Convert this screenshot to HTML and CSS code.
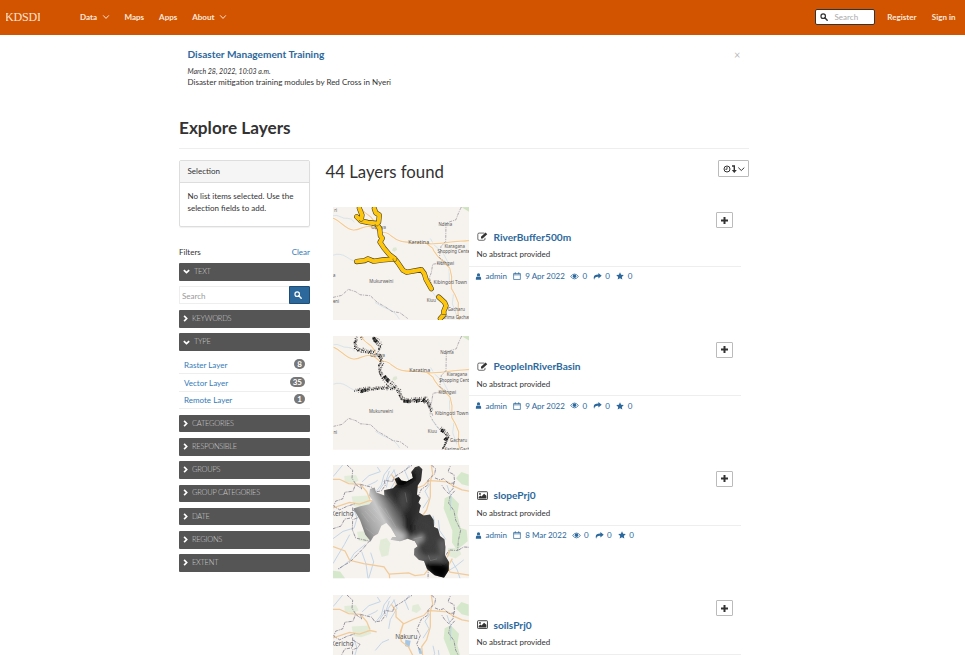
FILE: index.html
```
<!DOCTYPE html>
<html lang="en">
<head>
<meta charset="utf-8">
<title>Explore Layers</title>
<link rel="stylesheet" href="styles.css">
</head>
<body>
<svg class="defs" aria-hidden="true">
  <symbol id="chev" viewBox="0 0 10 10"><path d="M1.5 3 5 6.8 8.5 3" fill="none" stroke="currentColor" stroke-width="1.2"/></symbol>
  <symbol id="bold-chev" viewBox="0 0 10 10"><path d="M1.2 3 5 6.7 8.8 3" fill="none" stroke="currentColor" stroke-width="2.4"/></symbol>
  <symbol id="search" viewBox="0 0 10 10"><circle cx="4" cy="4" r="2.8" fill="none" stroke="currentColor" stroke-width="1.5"/><path d="M6 6 9 9" stroke="currentColor" stroke-width="1.8" stroke-linecap="round"/></symbol>
  <symbol id="edit" viewBox="0 0 12 10"><path d="M8 1.2H2.2Q.8 1.2.8 2.6V7.8Q.8 9.2 2.2 9.2H7.4Q8.8 9.2 8.8 7.8V6.5" fill="none" stroke="currentColor" stroke-width=".8"/><path d="M4.3 7.3V5.4L9.4.6 11.3 2.5 6.2 7.3Z" fill="currentColor"/></symbol>
  <symbol id="image" viewBox="0 0 12 10"><rect x=".5" y=".8" width="11" height="8.6" rx=".7" fill="none" stroke="currentColor"/><circle cx="3.2" cy="3.2" r="1.1" fill="currentColor"/><path d="M1.7 8.2V6.6L3.6 5 4.8 6.1 7.8 3.1 10.3 5.4V8.2Z" fill="currentColor"/></symbol>
  <symbol id="user" viewBox="0 0 8 9"><circle cx="4" cy="2.5" r="2.1" fill="currentColor"/><path d="M.6 8.6Q.4 4.5 2.4 4.4 4 5.6 5.6 4.4 7.6 4.5 7.4 8.6Z" fill="currentColor"/></symbol>
  <symbol id="cal" viewBox="0 0 9 9"><path d="M.7 1.7H8.3V8.4H.7ZM.7 3.2H8.3M2.6.2V2.4M6.4.2V2.4" fill="none" stroke="currentColor" stroke-width=".8"/></symbol>
  <symbol id="eye" viewBox="0 0 10 8"><path d="M.5 4Q5-1.6 9.5 4 5 9.4.5 4Z" fill="none" stroke="currentColor" stroke-width=".9"/><circle cx="5" cy="3.6" r="2" fill="currentColor"/></symbol>
  <symbol id="share" viewBox="0 0 10 8"><path d="M6 0 9.8 3.1 6 6.2V4.4Q2 4 1.1 7.7-.8 2 6 1.8Z" fill="currentColor"/></symbol>
  <symbol id="star" viewBox="0 0 10 10"><path d="M5 .4 6.4 3.4 9.7 3.8 7.3 6.1 7.9 9.4 5 7.8 2.1 9.4 2.7 6.1.3 3.8 3.6 3.4Z" fill="currentColor"/></symbol>

  <symbol id="town-map" viewBox="24 21 408 339">
    <rect x="24" y="21" width="408" height="339" fill="#f6f2ee"/>
    <g fill="none" stroke-linejoin="round">
      <path d="M205 143 214 141 216 149 208 155 201 151Z" fill="#dce8d1"/>
      <path d="M409 22 432 21V35L420 28Z" fill="#cfe3c1"/>
      <path d="M24 47Q36 44 46 50T68 55 88 66M24 165Q45 157 66 171T96 185M316 115 327 134 354 158 372 192 373 240 386 276 382 310 395 345M319 270 333 290 346 304M150 306Q175 322 192 327T223 356" stroke="#cbdde8" stroke-width="2"/>
      <path d="M24 54C50 64 62 90 86 90S117 73 139 80 157 97 169 97 180 95 190 101 207 117 227 123 275 125 296 129 348 130 374 126 409 124 432 121M304 129 323 144 327 153 338 168 359 188 374 203 380 229 379 264 390 283 400 307 399 339 403 360M106 21Q117 38 131 46T153 79" stroke="#fff" stroke-width="6"/>
      <path d="M24 54C50 64 62 90 86 90S117 73 139 80 157 97 169 97 180 95 190 101 207 117 227 123 275 125 296 129 348 130 374 126 409 124 432 121M304 129 323 144 327 153 338 168 359 188 374 203 380 229 379 264 390 283 400 307 399 339 403 360M106 21Q117 38 131 46T153 79" stroke="#f3cd98" stroke-width="4"/>
      <path d="M409 21Q399 41 393 59L363 69 362 124 348 139 343 172 362 186 323 192 319 217 313 232 323 262M24 291 50 285 70 267 92 274 105 283 136 286 157 306 182 320 201 333 225 337 248 354" stroke="#a29da5" stroke-width="2.5" stroke-dasharray="9 3 3 3"/>
    </g>
  </symbol>

  <symbol id="region-map" viewBox="24 15 408 342">
    <rect x="24" y="15" width="408" height="342" fill="#f6f2ee"/>
    <g fill="#d6e8cb">
      <path d="M359 115 377 106 402 132 397 166 407 205 425 211 428 245 396 271 381 249 382 212 356 146Z"/>
      <path d="M409 36 431 44V78L410 73 393 55Z"/>
      <g opacity=".6"><path d="M166 240 185 235 196 251 190 287 170 292 162 267Z"/><path d="M80 110 131 107 139 132 109 142 86 139Z"/><path d="M96 216 122 214 137 237 125 247 101 243Z"/><path d="M369 266 401 264 409 284 392 297 371 289Z"/><path d="M262 47 280 42 289 58 275 69 260 64ZM58 48 93 45 101 62 83 71 59 65Z"/></g>
      <path d="M24 334 45 336 61 357H24Z"/>
    </g>
    <g fill="none" stroke="#b0cce5" stroke-width="2.2">
      <path d="M53 15 31 42 24 50M111 66 132 47 166 35 157 21M128 77 151 66 158 61M151 98 169 75 177 45 196 20M164 89 183 62 193 33M184 83 190 55 209 29M191 117 196 89 216 55 206 29M251 60 240 34 253 15M294 145 312 117 300 94 316 71M318 221 329 191 324 168M340 181 344 213 362 239M366 76 378 110 376 152M24 237 54 215 87 205 96 175 87 149M24 312 41 283 58 255 74 225M42 329 76 301 87 282 121 254M129 357 123 313 110 276M131 357 146 307 137 279M379 301 397 332 405 357M416 301 391 321 373 332M151 182 171 158 192 149"/>
    </g>
    <g fill="#a3c7e5"><path d="M241 150 257 153 253 173 240 169ZM279 176 286 175 294 193 283 192Z"/></g>
    <path d="M24 58 44 58 71 71 106 73 125 95 135 119M24 144 74 128 103 133 135 122 155 126M24 261 60 274 74 302 116 312 177 322 192 344 251 340 270 348 298 345 316 321M194 357 193 344M199 43 213 63 213 81 235 101 225 134 229 155 251 172 269 209M225 129 234 103 265 88 296 77 310 62 328 63 368 66 384 78 411 90 432 94M316 62 316 111 305 150 290 171 294 205M316 63 323 42 319 15M382 297 369 320 375 338 432 347M374 274 367 293" fill="none" stroke="#f1cb99" stroke-width="3.8"/>
    <path d="M66 15 83 31 81 55 92 72 84 94 60 97 53 117 32 124 26 139 44 150 67 139 90 132M93 74 110 87 105 73 140 82 150 96 169 93 181 76 177 61 203 65 207 51 230 37 247 25 261 16M135 242 114 267 76 306 38 329M83 143 82 174 59 178 48 199 24 207M84 151 105 164 98 174 83 180 82 210 92 235 136 245M284 180 275 163 286 137 276 118 289 88 309 75 309 60 329 42 332 26 319 15M330 54 345 60 356 56 371 71 389 69 387 44 369 35 376 18M387 65 384 86 371 101 359 89 350 75M389 93 375 109 371 130 387 153 392 181 407 211 400 243 398 273 373 271 357 295 352 315M401 271 416 262 432 263M310 324 309 357" fill="none" stroke="#8f8c9a" stroke-width="2.8" stroke-dasharray="10 3 3 3"/>
  </symbol>

  <linearGradient id="relief" gradientUnits="userSpaceOnUse" x1="105" y1="205" x2="270" y2="120">
    <stop offset="0" stop-color="#777"/><stop offset=".17" stop-color="#a5a5a5"/><stop offset=".4" stop-color="#c8c8c8"/><stop offset=".58" stop-color="#777"/><stop offset=".75" stop-color="#3a3a3a"/><stop offset="1" stop-color="#3c3c3c"/>
  </linearGradient>
  <filter id="soften" x="-30%" y="-30%" width="160%" height="160%"><feGaussianBlur stdDeviation="8"/></filter>
  <clipPath id="county"><path id="county-edge" d="M85 146 106 139 133 133 143 121 132 107 135 87 149 83 153 97 178 107 177 91 204 85 216 73 209 57 221 51 229 62 245 65 264 54 259 36 270 22 282 18 292 28 288 62 278 77 276 104 287 114 280 129 287 137 282 158 296 167 315 164 326 181 327 202 339 207 345 229 358 239 361 262 360 287 372 307 371 333 357 355 329 347 306 328 297 304 282 301 267 286 268 267 278 260 270 245 248 237 225 245 197 240 202 232 214 232 197 204 184 190 169 198 159 222 146 230 137 245 121 225 105 181Z"/></clipPath>
</svg>

<header class="topbar">
  <div class="brand">KDSDI</div>
  <nav class="menu">
    <a>Data <svg class="caret"><use href="#chev"/></svg></a><a>Maps</a><a>Apps</a><a>About <svg class="caret"><use href="#chev"/></svg></a>
  </nav>
  <div class="top-search"><svg><use href="#search"/></svg><span>Search</span></div>
  <a class="register">Register</a><a class="signin">Sign in</a>
</header>

<main class="page">
  <section class="notice">
    <div>
      <h4>Disaster Management Training</h4>
      <em>March 28, 2022, 10:03 a.m.</em>
      <p>Disaster mitigation training modules by Red Cross in Nyeri</p>
    </div>
    <span class="close">×</span>
  </section>
  <h2 class="title">Explore Layers</h2>

  <div class="columns">
    <aside class="side">
      <div class="panel">
        <div class="panel-head">Selection</div>
        <div class="panel-body">No list items selected. Use the selection fields to add.</div>
      </div>
      <div class="filters-head"><span>Filters</span><a>Clear</a></div>
      <div class="bar open"><svg><use href="#bold-chev"/></svg>TEXT</div>
      <div class="side-search"><span>Search</span><button aria-label="Search"><svg><use href="#search"/></svg></button></div>
      <div class="bar"><svg><use href="#bold-chev"/></svg>KEYWORDS</div>
      <div class="bar open"><svg><use href="#bold-chev"/></svg>TYPE</div>
      <ul class="types">
        <li><a>Raster Layer</a><b>8</b></li>
        <li><a>Vector Layer</a><b>35</b></li>
        <li><a>Remote Layer</a><b>1</b></li>
      </ul>
      <div class="bar"><svg><use href="#bold-chev"/></svg>CATEGORIES</div>
      <div class="bar"><svg><use href="#bold-chev"/></svg>RESPONSIBLE</div>
      <div class="bar"><svg><use href="#bold-chev"/></svg>GROUPS</div>
      <div class="bar"><svg><use href="#bold-chev"/></svg>GROUP CATEGORIES</div>
      <div class="bar"><svg><use href="#bold-chev"/></svg>DATE</div>
      <div class="bar"><svg><use href="#bold-chev"/></svg>REGIONS</div>
      <div class="bar"><svg><use href="#bold-chev"/></svg>EXTENT</div>
    </aside>

    <section class="results">
      <div class="results-head">
        <h3>44 Layers found</h3>
        <button class="sort" aria-label="Sort"><svg viewBox="0 0 22 10"><g fill="none" stroke="currentColor"><circle cx="4" cy="5" r="3" stroke-width="1"/><path d="M4 3V5.3H2.3" stroke-width=".9"/><path d="M9 2H11.3V7" stroke-width="1.4"/><path d="M15.3 3.6 18.3 6.5 21.3 3.6" stroke-width="1"/></g><path d="M8.8 6H13.8L11.3 9Z" fill="currentColor"/></svg></button>
      </div>

      <article class="layer">
        <svg class="thumb" viewBox="24 21 408 339" preserveAspectRatio="none">
          <use href="#town-map" x="24" y="21" width="408" height="339"/>
          <g class="map-label">
            <text x="32" y="35">ri</text><text x="161" y="86">Othaya</text><text x="361" y="78">Ndima</text><text x="281" y="131" class="large">Karatina</text><text x="389" y="143">Kiaragana</text><text x="389" y="159">Shopping Center</text><text x="361" y="194">Kibingwi</text><text x="169" y="247">Mukurweini</text><text x="376" y="252" class="town">Kibingoti Town</text><text x="319" y="306">Kiuu</text><text x="394" y="331">Gacharu</text><text x="392" y="356">Karima Gachari</text><text x="33" y="307">eni</text><text x="28" y="231">a</text>
          </g>
          <g fill="none" stroke-linecap="round" stroke-linejoin="round">
            <path class="buffer-edge" d="M103 25 111 45 108 62 95 50M108 63 128 67 155 70M148 26 152 38 163 45 161 66 155 73 164 85 166 107 172 114 165 126 177 144 194 164 209 175M95 184 119 181 129 176 146 183 173 179 208 176M209 175 219 188 234 210 245 216 289 208 298 220 303 237 319 265M341 290 359 306 363 316 356 333 357 342 346 354"/>
            <path class="buffer" d="M103 25 111 45 108 62 95 50M108 63 128 67 155 70M148 26 152 38 163 45 161 66 155 73 164 85 166 107 172 114 165 126 177 144 194 164 209 175M95 184 119 181 129 176 146 183 173 179 208 176M209 175 219 188 234 210 245 216 289 208 298 220 303 237 319 265M341 290 359 306 363 316 356 333 357 342 346 354"/>
            <path d="M103 61A6 6 0 0 0 114 61M150 73A6 6 0 0 0 160 76M204 176A6 6 0 1 0 215 175M351 342H362" stroke="#373321" stroke-width="1.6"/>
          </g>
        </svg>
        <div class="info">
          <button class="add" aria-label="Add"><svg viewBox="0 0 9 9"><path d="M4.5 1V8M1 4.5H8" stroke="currentColor" stroke-width="2"/></svg></button>
          <h4><svg><use href="#edit"/></svg><a>RiverBuffer500m</a></h4>
          <p>No abstract provided</p>
          <div class="meta"><svg class="i-user"><use href="#user"/></svg><span>admin</span><svg class="i-cal"><use href="#cal"/></svg><span>9 Apr 2022</span><svg class="i-eye"><use href="#eye"/></svg><span>0</span><svg class="i-share"><use href="#share"/></svg><span>0</span><svg class="i-star"><use href="#star"/></svg><span>0</span></div>
        </div>
      </article>

      <article class="layer">
        <svg class="thumb" viewBox="24 18 408 339" preserveAspectRatio="none">
          <rect x="24" y="18" width="408" height="339" fill="#f6f2ee"/>
          <use href="#town-map" x="25" y="15" width="408" height="345"/>
          <g class="map-label">
            <text x="158" y="80">Othaya</text><text x="366" y="72">Ndima</text><text x="284" y="126" class="large">Karatina</text><text x="396" y="137">Kiaragana</text><text x="394" y="156">Shopping Center</text><text x="367" y="192">Kibingwi</text><text x="168" y="247">Mukurweini</text><text x="380" y="253" class="town">Kibingoti Town</text><text x="322" y="309">Kiuu</text><text x="401" y="335">Gacharu</text><text x="405" y="360">Karima Gachari</text><text x="31" y="311">ni</text>
          </g>
          <g fill="none" stroke="#171717">
            <g id="people">
              <path d="M91 25 87 44 92 54 98 62 110 60 123 66 M107 22 111 31M121 66 148 66M144 21 148 34 160 46 163 62M155 69 168 88 161 108 164 129 174 145 200 161 216 181 229 207 260 216M88 183 109 178 126 176 145 179 183 172 202 179M255 209 283 207 301 206 310 222 319 246M345 295 361 309 369 321 361 337 352 357" stroke-width="4.5" stroke-dasharray="2 4 1 3 5 2 1 5 3 3"/>
              <path d="M94 28 88 55 109 66 143 71M149 27 164 38 167 52M162 78 172 104 162 128 176 153 193 171 223 183 227 203 249 216M100 187 128 182 154 174 187 179M239 215 281 214 304 213 313 236M348 301 365 316 366 331 357 349" stroke-width="3" stroke-dasharray="1 4 4 3 2 5 1 2"/>
            </g>
            <use href="#people" x="4" y="-5" opacity=".6"/>
            <path d="M145 23 156 37M178 138 192 154M108 184 125 178M235 212 254 214M272 213 285 210M294 208 302 217M359 323 365 330M348 299 355 302" stroke-width="10" stroke-dasharray="5 1 2 1 1 1"/>
            <path d="M306 210 317 233 315 255 324 271 343 297" stroke-width="1.5" stroke-dasharray="2 4 1 3"/>
          </g>
        </svg>
        <div class="info">
          <button class="add" aria-label="Add"><svg viewBox="0 0 9 9"><path d="M4.5 1V8M1 4.5H8" stroke="currentColor" stroke-width="2"/></svg></button>
          <h4><svg><use href="#edit"/></svg><a>PeopleInRiverBasin</a></h4>
          <p>No abstract provided</p>
          <div class="meta"><svg class="i-user"><use href="#user"/></svg><span>admin</span><svg class="i-cal"><use href="#cal"/></svg><span>9 Apr 2022</span><svg class="i-eye"><use href="#eye"/></svg><span>0</span><svg class="i-share"><use href="#share"/></svg><span>0</span><svg class="i-star"><use href="#star"/></svg><span>0</span></div>
        </div>
      </article>

      <article class="layer">
        <svg class="thumb" viewBox="24 15 408 342" preserveAspectRatio="none">
          <use href="#region-map" x="24" y="15" width="408" height="342"/>
          <text x="52" y="169" class="map-label city">Kericho</text>
          <use href="#county-edge" fill="url(#relief)"/>
          <g clip-path="url(#county)">
            <g filter="url(#soften)">
              <path d="M175 90 232 70 280 15 300 80 282 160 253 215 239 161 190 110Z" fill="#202020" opacity=".55"/>
              <path d="M228 95 251 100 247 143 233 158 220 128Z" fill="#777" opacity=".35"/>
              <path d="M205 55 235 55 262 30 270 60 225 85Z" fill="#000"/>
              <path d="M245 140 264 210 257 240 243 205Z" fill="#181818"/>
              <path d="M282 165 325 190 340 250 325 280 295 260Z" fill="#3c3c3c"/>
              <path d="M257 238 290 222 298 236 280 255 268 273Z" fill="#999"/>
              <path d="M342 240 364 239 360 290 344 281Z" fill="#666"/>
              <path d="M275 291 350 288 357 303 301 302Z" fill="#666"/>
              <path d="M293 310 340 310 377 321 357 362 325 348Z" fill="#000"/>
              <path d="M205 205 245 226 233 248 195 241Z" fill="#bbb"/>
            </g>
            <path d="M110 159 131 187M119 153 151 187M130 148 164 183M143 143 178 181M163 138 196 180M180 145 212 202M121 204 147 225M240 97 246 128M310 287 316 303 336 298M265 238 292 232" fill="none" stroke="#ddd" stroke-width="1.5" opacity=".35"/>
          </g>
        </svg>
        <div class="info">
          <button class="add" aria-label="Add"><svg viewBox="0 0 9 9"><path d="M4.5 1V8M1 4.5H8" stroke="currentColor" stroke-width="2"/></svg></button>
          <h4><svg><use href="#image"/></svg><a>slopePrj0</a></h4>
          <p>No abstract provided</p>
          <div class="meta"><svg class="i-user"><use href="#user"/></svg><span>admin</span><svg class="i-cal"><use href="#cal"/></svg><span>8 Mar 2022</span><svg class="i-eye"><use href="#eye"/></svg><span>0</span><svg class="i-share"><use href="#share"/></svg><span>0</span><svg class="i-star"><use href="#star"/></svg><span>0</span></div>
        </div>
      </article>

      <article class="layer">
        <svg class="thumb" viewBox="24 15 408 342" preserveAspectRatio="none">
          <use href="#region-map" x="24" y="15" width="408" height="342"/>
          <text x="52" y="169" class="map-label city">Kericho</text>
          <text x="244" y="147" class="map-label city">Nakuru</text>
        </svg>
        <div class="info">
          <button class="add" aria-label="Add"><svg viewBox="0 0 9 9"><path d="M4.5 1V8M1 4.5H8" stroke="currentColor" stroke-width="2"/></svg></button>
          <h4><svg><use href="#image"/></svg><a>soilsPrj0</a></h4>
          <p>No abstract provided</p>
          <div class="meta"></div>
        </div>
      </article>
    </section>
  </div>
</main>
</body>
</html>
```
FILE: styles.css
```
* { box-sizing: border-box; }
html, body { height: 100%; }
body { margin: 0; overflow: hidden; background: #fff; color: #333; font: 8px/12px Lato, "Liberation Sans", sans-serif; }
h2, h3, h4, p, ul { margin: 0; padding: 0; }
a { color: #2c689c; }
button { padding: 0; font: inherit; }
svg { display: block; flex: none; }
.defs { position: absolute; width: 0; height: 0; }

.topbar { display: flex; align-items: center; height: 35px; padding: 0 9.5px 2px 6px; background: #d35400; color: #fff; font-weight: 700; }
.topbar a { color: #fbe9dc; white-space: nowrap; }
.brand { width: 34px; margin-right: 40px; overflow: hidden; text-indent: -1px; white-space: nowrap; letter-spacing: -.15px; font: 12px/14px "Liberation Serif", serif; color: #fbe3d2; }
.menu { display: flex; flex: 1; }
.menu a { display: flex; align-items: center; gap: 4.5px; margin-right: 15px; }
.caret { width: 8px; height: 8px; }
.top-search { display: flex; align-items: center; gap: 7px; width: 60px; height: 16px; margin-top: 1px; padding: 0 0 1px 3.5px; border: 1px solid #333; border-radius: 2px; background: #fff; color: #aaa; font-weight: 400; }
.top-search svg { width: 8px; height: 8px; color: #333; }
.register { margin-left: 12.3px; }
.signin { margin-left: 15.4px; }

.page { width: 570px; height: 620px; margin-left: 179px; overflow: hidden; }
.notice { display: flex; justify-content: space-between; height: 82px; padding: 12px 8.5px 0 8.5px; }
.notice h4 { font-size: 10.15px; line-height: 14px; font-weight: 700; color: #2c689c; }
.notice em { display: block; margin-top: 5px; font-size: 7px; line-height: 11px; }
.notice p { line-height: 11px; }
.close { font-size: 11px; line-height: 15px; color: #bbb; }
.title { height: 32px; border-bottom: 1px solid #eee; font-size: 17.2px; line-height: 21px; font-weight: 700; }
.columns { display: flex; gap: 15px; padding-top: 11px; }
.side { width: 131px; flex: none; }
.panel { height: 67px; border: 1px solid #ddd; border-radius: 2px; box-shadow: 0 1px 1px rgba(0,0,0,.06); }
.panel-head { height: 22px; padding-left: 7.5px; border-bottom: 1px solid #ddd; background: #f5f5f5; line-height: 21px; }
.panel-body { padding: 7px 7.5px; }
.filters-head { display: flex; justify-content: space-between; height: 36px; padding-top: 19px; }
.filters-head a { color: #337ab7; }
.bar { display: flex; align-items: center; gap: 3px; height: 17.5px; margin-bottom: 5.75px; padding-left: 3px; border-radius: 1px; background: #555; color: #ccc; font-size: 7.5px; font-weight: 300; letter-spacing: -.25px; }
.bar svg { width: 7px; height: 7px; margin-top: -1px; color: #fff; transform: rotate(-90deg); }
.bar.open { gap: 4px; padding-left: 4px; }
.bar.open svg { margin-top: 0; transform: none; }
.side-search { display: flex; height: 18px; margin-bottom: 5.9px; border: 1px solid #eee; color: #999; line-height: 18px; }
.side-search span { flex: 1; padding-left: 2px; }
.side-search button { display: flex; align-items: center; justify-content: center; width: 21px; height: 18px; margin: -1px -1px 0 0; padding-right: 3px; border: 1px solid #204d74; border-radius: 0 1px 1px 0; background: #2c689c; color: #fff; }
.side-search button svg { width: 8px; height: 8px; }
.types { margin-bottom: 5.8px; list-style: none; }
.types li { display: flex; align-items: center; justify-content: space-between; height: 17.5px; padding: .5px 5px 0; border-bottom: 1px solid #eee; }
.types a { color: #337ab7; }
.types b { min-width: 11px; height: 10px; margin-top: -2px; padding: 0 3px; border-radius: 5px; background: #777; color: #fff; font-size: 8px; line-height: 10px; text-align: center; }

.results { flex: 1; }
.results-head { display: flex; justify-content: space-between; height: 46.8px; padding-left: .5px; }
.results-head h3 { font-size: 16.75px; line-height: 24px; font-weight: 400; }
.sort { display: flex; align-items: center; justify-content: center; width: 31px; height: 17px; border: 1px solid #bbb; border-radius: 1px; background: #fff; color: #333; }
.sort svg { width: 22px; height: 10px; }
.layer { display: flex; height: 129.3px; padding: 0 8px; }
.thumb { width: 136px; height: 113.5px; overflow: hidden; }
.map-label { font: 13px "Noto Sans", sans-serif; fill: #555; text-anchor: middle; }
.map-label .large { font-size: 16px; }
.map-label .town { font-size: 14.5px; }
.map-label.city { font-size: 19px; }
.buffer-edge { stroke: #4a4020; stroke-width: 15.5px; }
.buffer { stroke: #fdc60d; stroke-width: 12px; }
.info { display: flex; flex: 1; flex-direction: column; }
.add { display: flex; align-items: center; justify-content: center; align-self: flex-end; width: 17px; height: 16px; margin: 5.5px 8px 0 0; border: 1px solid #bbb; border-radius: 1px; background: #fff; color: #333; }
.add svg { width: 9px; height: 9px; }
.info h4 { display: flex; align-items: center; gap: 6px; height: 14px; margin-top: 1.5px; padding-left: 7.5px; font-size: 10.15px; line-height: 14px; }
.info h4 svg { width: 11px; height: 9px; }
.info p { margin-top: 4.6px; padding-left: 7.5px; }
.meta { display: flex; align-items: center; height: 20px; margin-top: 5.6px; padding-left: 6px; border-top: 1px solid #eee; color: #2c689c; line-height: 10px; }
.i-user { width: 7px; height: 7px; margin-right: 3.5px; }
.i-cal { width: 8px; height: 8px; margin: 0 4px 0 6.3px; }
.i-eye { width: 9px; height: 7px; margin: 0 3px 0 5.5px; }
.i-share { width: 9px; height: 7px; margin: 0 3.2px 0 6px; }
.i-star { width: 8px; height: 8px; margin: 0 3.8px 0 6px; }
```
